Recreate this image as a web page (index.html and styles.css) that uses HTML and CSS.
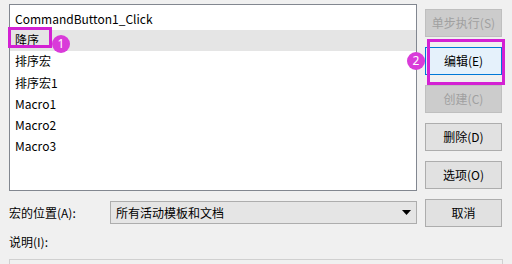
FILE: index.html
```html
<!DOCTYPE html>
<html>
<head>
<meta charset="utf-8">
<link rel="stylesheet" href="styles.css">
</head>
<body>
<div class="dialog">
  <div class="top">
    <div class="left">
      <div class="listbox">
        <div class="item">CommandButton1_Click</div>
        <div class="item selected"><span class="mark">降序</span><span class="badge b1">1</span></div>
        <div class="item">排序宏</div>
        <div class="item">排序宏1</div>
        <div class="item">Macro1</div>
        <div class="item">Macro2</div>
        <div class="item">Macro3</div>
      </div>
      <div class="combo-row">
        <span class="label">宏的位置(A):</span>
        <div class="combo">
          <span>所有活动模板和文档</span>
          <svg class="arrow" width="9" height="5" viewBox="0 0 9 5"><path d="M0 0H9L4.5 5Z" fill="#000"/></svg>
        </div>
      </div>
    </div>
    <div class="buttons">
      <div class="btn disabled">单步执行(S)</div>
      <div class="btn primary">编辑(E)<span class="hl"></span><span class="badge b2">2</span></div>
      <div class="btn disabled">创建(C)</div>
      <div class="btn">删除(D)</div>
      <div class="btn">选项(O)</div>
      <div class="btn">取消</div>
    </div>
  </div>
  <div class="desc-label">说明(I):</div>
  <div class="desc"></div>
</div>
</body>
</html>
```
FILE: styles.css
```css
html, body {
  margin: 0;
  padding: 0;
  background: #f0f0f0;
  width: 512px;
  height: 264px;
  overflow: hidden;
  font-family: "Noto Sans CJK SC", "Noto Sans", sans-serif;
  font-size: 12px;
  color: #000;
}
.dialog {
  padding: 4px 0 0 9px;
}
.top {
  display: flex;
  gap: 8px;
}
.left {
  width: 408px;
  display: flex;
  flex-direction: column;
}
.listbox {
  height: 181px;
  background: #fff;
  border: 1px solid #828790;
  padding-top: 4px;
  box-sizing: content-box;
}
.item {
  height: 21.2px;
  line-height: 20px;
  padding-left: 5px;
  position: relative;
  white-space: nowrap;
}
.item.selected {
  background: #e5e5e5;
}
.mark {
  position: relative;
}
.mark::before {
  content: "";
  position: absolute;
  left: -7px;
  top: -4px;
  width: 38px;
  height: 15px;
  border: 3px solid #d321d3;
}
.badge {
  position: absolute;
  width: 18px;
  height: 18px;
  border-radius: 50%;
  background: #d93bd9;
  color: #fff;
  font-size: 12px;
  line-height: 18px;
  text-align: center;
  font-family: "Noto Sans", sans-serif;
}
.b1 {
  left: 42px;
  top: 5px;
}
.combo-row {
  display: flex;
  align-items: center;
  margin-top: 10px;
}
.label {
  width: 101px;
}
.combo {
  flex: 1;
  height: 21px;
  background: #e5e5e5;
  border: 1px solid #adadad;
  display: flex;
  align-items: center;
  justify-content: space-between;
  padding: 0 5px 0 5px;
}
.buttons {
  display: flex;
  flex-direction: column;
  gap: 10px;
  padding-top: 5px;
  width: 77px;
}
.btn {
  position: relative;
  height: 26px;
  border: 1px solid #adadad;
  background: #e1e1e1;
  text-align: center;
  line-height: 26px;
}
.btn.disabled {
  background: #cccccc;
  border-color: #bfbfbf;
  color: #a0a0a0;
}
.btn.primary {
  background: #e5f1fb;
  border-color: #0078d7;
}
.hl {
  position: absolute;
  left: 1px;
  top: -9px;
  width: 72px;
  height: 40px;
  border: 3px solid #d321d3;
}
.b2 {
  left: -19px;
  top: 4px;
}
.desc-label {
  margin-top: 7px;
  height: 16px;
  line-height: 16px;
}
.desc {
  margin-top: 9px;
  width: 492px;
  height: 10px;
  border: 1px solid #d0d0d0;
  border-bottom: none;
  background: #f0f0f0;
}
```
